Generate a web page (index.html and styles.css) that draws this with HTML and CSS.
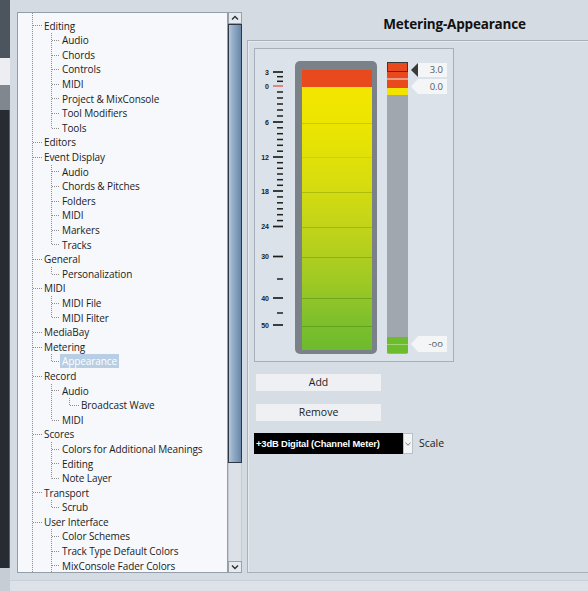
FILE: index.html
```html
<!DOCTYPE html>
<html>
<head>
<meta charset="utf-8">
<link rel="stylesheet" href="styles.css">
</head>
<body>
<div class="app">
  <div class="strip">
    <div class="s1"></div><div class="s2"></div><div class="s3"></div><div class="s4"></div><div class="s5"></div>
  </div>
  <div class="content">
    <div class="main">
      <div class="nav">
        <div class="tree">
          <div class="row l0">Editing</div>
          <div class="group g1">
            <div class="row l1">Audio</div>
            <div class="row l1">Chords</div>
            <div class="row l1">Controls</div>
            <div class="row l1">MIDI</div>
            <div class="row l1">Project &amp; MixConsole</div>
            <div class="row l1">Tool Modifiers</div>
            <div class="row l1">Tools</div>
          </div>
          <div class="row l0">Editors</div>
          <div class="row l0">Event Display</div>
          <div class="group g1">
            <div class="row l1">Audio</div>
            <div class="row l1">Chords &amp; Pitches</div>
            <div class="row l1">Folders</div>
            <div class="row l1">MIDI</div>
            <div class="row l1">Markers</div>
            <div class="row l1">Tracks</div>
          </div>
          <div class="row l0">General</div>
          <div class="group g1">
            <div class="row l1">Personalization</div>
          </div>
          <div class="row l0">MIDI</div>
          <div class="group g1">
            <div class="row l1">MIDI File</div>
            <div class="row l1">MIDI Filter</div>
          </div>
          <div class="row l0">MediaBay</div>
          <div class="row l0">Metering</div>
          <div class="group g1">
            <div class="row l1"><span class="sel">Appearance</span></div>
          </div>
          <div class="row l0">Record</div>
          <div class="group g1">
            <div class="row l1">Audio</div>
            <div class="group g2">
              <div class="row l2">Broadcast Wave</div>
            </div>
            <div class="row l1">MIDI</div>
          </div>
          <div class="row l0">Scores</div>
          <div class="group g1">
            <div class="row l1">Colors for Additional Meanings</div>
            <div class="row l1">Editing</div>
            <div class="row l1">Note Layer</div>
          </div>
          <div class="row l0">Transport</div>
          <div class="group g1">
            <div class="row l1">Scrub</div>
          </div>
          <div class="row l0">User Interface</div>
          <div class="group g1 open">
            <div class="row l1">Color Schemes</div>
            <div class="row l1">Track Type Default Colors</div>
            <div class="row l1">MixConsole Fader Colors</div>
            <div class="row l1">&nbsp;</div>
          </div>
        </div>
        <div class="scroll">
          <div class="sbtn"><svg width="12" height="10" viewBox="0 0 12 10"><path d="M3 6.5 L6 3.5 L9 6.5" fill="none" stroke="#2a2f35" stroke-width="1.4"/></svg></div>
          <div class="thumb"></div>
          <div class="track"></div>
          <div class="sbtn"><svg width="12" height="10" viewBox="0 0 12 10"><path d="M3 3.5 L6 6.5 L9 3.5" fill="none" stroke="#2a2f35" stroke-width="1.4"/></svg></div>
        </div>
      </div>
      <div class="right">
        <div class="title">Metering-Appearance</div>
        <div class="outer">
          <div class="meterbox">
            <svg class="scale" width="38" height="290" viewBox="0 0 38 290">
              <g class="long">
                <line x1="18" y1="23" x2="28" y2="23"/>
                <line x1="18" y1="73" x2="28" y2="73"/>
                <line x1="18" y1="108" x2="28" y2="108"/>
                <line x1="18" y1="142" x2="28" y2="142"/>
                <line x1="18" y1="177.5" x2="28" y2="177.5"/>
                <line x1="18" y1="207.5" x2="28" y2="207.5"/>
                <line x1="18" y1="249" x2="28" y2="249"/>
                <line x1="18" y1="276" x2="28" y2="276"/>
              </g>
              <line class="zero" x1="18" y1="37" x2="28" y2="37"/>
              <g class="short">
                <line x1="22" y1="27.7" x2="28" y2="27.7"/>
                <line x1="22" y1="32.3" x2="28" y2="32.3"/>
                <line x1="22" y1="43" x2="28" y2="43"/>
                <line x1="22" y1="49" x2="28" y2="49"/>
                <line x1="22" y1="55" x2="28" y2="55"/>
                <line x1="22" y1="61" x2="28" y2="61"/>
                <line x1="22" y1="67" x2="28" y2="67"/>
                <line x1="22" y1="78.8" x2="28" y2="78.8"/>
                <line x1="22" y1="84.7" x2="28" y2="84.7"/>
                <line x1="22" y1="90.5" x2="28" y2="90.5"/>
                <line x1="22" y1="96.3" x2="28" y2="96.3"/>
                <line x1="22" y1="102.2" x2="28" y2="102.2"/>
                <line x1="22" y1="113.7" x2="28" y2="113.7"/>
                <line x1="22" y1="119.3" x2="28" y2="119.3"/>
                <line x1="22" y1="125" x2="28" y2="125"/>
                <line x1="22" y1="130.7" x2="28" y2="130.7"/>
                <line x1="22" y1="136.3" x2="28" y2="136.3"/>
                <line x1="22" y1="147.9" x2="28" y2="147.9"/>
                <line x1="22" y1="153.8" x2="28" y2="153.8"/>
                <line x1="22" y1="159.8" x2="28" y2="159.8"/>
                <line x1="22" y1="165.7" x2="28" y2="165.7"/>
                <line x1="22" y1="171.6" x2="28" y2="171.6"/>
                <line x1="22" y1="230" x2="28" y2="230"/>
                <line x1="22" y1="264" x2="28" y2="264"/>
              </g>
              <g class="lbl">
                <text x="14" y="25.5">3</text>
                <text x="14" y="39.5">0</text>
                <text x="14" y="75.5">6</text>
                <text x="14" y="110.5">12</text>
                <text x="14" y="144.5">18</text>
                <text x="14" y="180">24</text>
                <text x="14" y="210">30</text>
                <text x="14" y="251.5">40</text>
                <text x="14" y="278.5">50</text>
              </g>
            </svg>
            <div class="bigmeter">
              <div class="bm-red"></div>
              <div class="bm-fill"></div>
            </div>
            <div class="smallmeter">
              <div class="sm-selred"></div>
              <div class="sm-red a"></div>
              <div class="sm-line"></div>
              <div class="sm-red b"></div>
              <div class="sm-yel"></div>
              <div class="sm-gap"></div>
              <div class="sm-green"></div>
            </div>
            <div class="tags">
              <div class="tag active">3.0</div>
              <div class="tag second">0.0</div>
              <div class="tag third">-oo</div>
            </div>
          </div>
          <div class="btn first">Add</div>
          <div class="btn">Remove</div>
          <div class="scalerow">
            <div class="select">+3dB Digital (Channel Meter)</div>
            <div class="selarrow"><svg width="6" height="4" viewBox="0 0 6 4"><path d="M0.5 0.8 L3 3.2 L5.5 0.8" fill="none" stroke="#777" stroke-width="1"/></svg></div>
            <div class="scalelbl">Scale</div>
          </div>
        </div>
      </div>
    </div>
    <div class="footer"></div>
  </div>
</div>
</body>
</html>
```
FILE: styles.css
```css
html, body {
  margin: 0;
  padding: 0;
}
body {
  width: 588px;
  height: 591px;
  overflow: hidden;
  background: #d4dbe3;
  font-family: "Open Sans", "Noto Sans", sans-serif;
}
.app {
  display: flex;
  width: 588px;
  height: 591px;
}
.strip {
  width: 10px;
  flex: none;
  display: flex;
  flex-direction: column;
}
.s1 { height: 58px; background: #4c545e; }
.s2 { height: 27px; background: #eceef1; }
.s3 { height: 25px; background: #80878f; }
.s4 { height: 458px; background: #272c32; border-right: 1px solid #59616a; box-sizing: border-box; }
.s5 { flex: 1; background: #c6cdd5; }

.content {
  flex: 1;
  display: flex;
  flex-direction: column;
  min-width: 0;
}
.main {
  display: flex;
  height: 573px;
}
.nav {
  display: flex;
  margin-top: 12px;
  margin-left: 7px;
  height: 561px;
}
.tree {
  width: 211px;
  box-sizing: border-box;
  border: 1px solid #949ea9;
  background-color: #f6f8fb;
  padding-top: 5.7px;
  overflow: hidden;
  background-image: repeating-linear-gradient(to bottom, #8e8e8e 0 1px, transparent 1px 2px);
  background-repeat: no-repeat;
  background-position: 14px 0;
  background-size: 1px 100%;
}
.row {
  height: 14.6px;
  line-height: 14.6px;
  font-size: 10px;
  letter-spacing: -0.1px;
  color: #1b1b1b;
  white-space: nowrap;
  background-image: repeating-linear-gradient(to right, #8e8e8e 0 1px, transparent 1px 2px);
  background-repeat: no-repeat;
}
.l0 { padding-left: 26px; background-position: 15px 50%; background-size: 9px 1px; }
.l1 { padding-left: 44px; background-position: 34px 50%; background-size: 8px 1px; }
.l2 { padding-left: 63px; background-position: 52px 50%; background-size: 9px 1px; }
.group {
  background-image: repeating-linear-gradient(to bottom, #8e8e8e 0 1px, transparent 1px 2px);
  background-repeat: no-repeat;
  background-size: 1px calc(100% - 7.3px);
}
.g1 { background-position: 33px 0; }
.g2 { background-position: 51px 0; }
.g1.open { background-size: 1px 100%; }
.sel {
  display: inline-block;
  background: #b8cee4;
  color: #ffffff;
  padding: 0 2px;
  margin-left: -2px;
  line-height: 14px;
}

.scroll {
  width: 14px;
  display: flex;
  flex-direction: column;
}
.sbtn {
  height: 12px;
  box-sizing: border-box;
  border: 1px solid #98a1ab;
  background: #e6eaef;
  display: flex;
  align-items: center;
  justify-content: center;
}
.thumb {
  height: 439px;
  box-sizing: border-box;
  border: 1px solid #2e3741;
  background: linear-gradient(to right, #b3c6da 0%, #93acc7 35%, #7c99b9 70%, #6a87a7 100%);
}
.track {
  flex: 1;
  background: #dce1e7;
  border-left: 1px solid #c3cad2;
  border-right: 1px solid #c3cad2;
}

.right {
  margin-left: 5px;
  flex: 1;
  min-width: 0;
  display: flex;
  flex-direction: column;
}
.title {
  height: 40px;
  box-sizing: border-box;
  padding-top: 14px;
  padding-left: 74px;
  line-height: 20px;
  text-align: center;
  font-weight: 700;
  font-size: 13.5px;
  color: #111;
  letter-spacing: -0.2px;
}
.outer {
  flex: 1;
  border: 1px solid #a8b0b9;
  border-right: none;
  box-shadow: inset 1px 1px 0 #e6eaef;
  background: #d7dde5;
  padding: 7px 0 0 6px;
}
.meterbox {
  width: 200px;
  height: 314px;
  box-sizing: border-box;
  border: 1px solid #a7afb9;
  background: #dce2e9;
  display: flex;
  align-items: flex-start;
}
.scale { flex: none; }
.scale line { stroke: #1e1e1e; }
.scale .long line { stroke-width: 1.7; }
.scale .short line { stroke-width: 1.5; }
.scale .zero { stroke: #e2534a; stroke-width: 1.3; }
.scale .lbl text {
  font-family: "Liberation Sans", Arial, sans-serif;
  font-weight: 700;
  font-size: 7px;
  fill: #222;
  text-anchor: end;
}
.bigmeter {
  margin-top: 12px;
  margin-left: 2px;
  width: 82px;
  height: 293px;
  box-sizing: border-box;
  padding: 9px 5px 4px 7px;
  background: #7b8189;
  border-radius: 5px;
  display: flex;
  flex-direction: column;
}
.bm-red { height: 17px; background: #e8491d; }
.bm-fill {
  flex: 1;
  background:
    linear-gradient(rgba(110,130,0,.28), rgba(110,130,0,.28)) no-repeat 0 36px / 100% 1px,
    linear-gradient(rgba(110,130,0,.15), rgba(110,130,0,.15)) no-repeat 0 70px / 100% 1px,
    linear-gradient(rgba(110,130,0,.35), rgba(110,130,0,.35)) no-repeat 0 105px / 100% 1px,
    linear-gradient(rgba(110,130,0,.35), rgba(110,130,0,.35)) no-repeat 0 140px / 100% 1px,
    linear-gradient(rgba(80,120,0,.35), rgba(80,120,0,.35)) no-repeat 0 170px / 100% 1px,
    linear-gradient(rgba(60,110,0,.35), rgba(60,110,0,.35)) no-repeat 0 211px / 100% 1px,
    linear-gradient(rgba(50,110,0,.35), rgba(50,110,0,.35)) no-repeat 0 239px / 100% 1px,
    linear-gradient(to bottom, #f3e700 0%, #ece500 14%, #d8dd0e 36%, #bfd31a 55%, #9fc924 74%, #80c02b 88%, #6cbb2e 100%);
}
.smallmeter {
  margin-top: 13px;
  margin-left: 10px;
  width: 21px;
  height: 292px;
  background: #a1a7ae;
  border-radius: 0 0 2px 2px;
  display: flex;
  flex-direction: column;
}
.sm-selred { height: 10px; box-sizing: border-box; border: 1.5px solid #3a3a3a; background: #e8491d; }
.sm-red.a { height: 6px; background: #e8491d; }
.sm-line { height: 2px; background: #eb9a84; }
.sm-red.b { height: 8px; background: #e8491d; }
.sm-yel { height: 7px; background: #f2e300; }
.sm-gap { flex: 1; }
.sm-green {
  height: 16px;
  margin-bottom: 1px;
  background: linear-gradient(#9fd678, #9fd678) no-repeat 0 7px / 100% 1px, #6cbc2c;
}
.tags {
  margin-left: 3px;
  margin-top: 14px;
  display: flex;
  flex-direction: column;
}
.tag {
  width: 36px;
  height: 14px;
  box-sizing: border-box;
  padding-right: 4px;
  text-align: right;
  font-size: 9.5px;
  line-height: 14px;
  color: #555b62;
  background: #f3f5f7;
  clip-path: polygon(7px 0, 100% 0, 100% 100%, 7px 100%, 0 50%);
}
.tag.active {
  background: linear-gradient(to right, #3a3a3a 0 7px, #f3f5f7 7px);
}
.tag.second { margin-top: 2px; height: 15px; line-height: 15px; }
.tag.third { margin-top: 242px; height: 16px; line-height: 16px; }

.btn {
  width: 125px;
  height: 17px;
  margin-left: 2px;
  margin-top: 13px;
  background: #eef0f3;
  text-align: center;
  font-size: 10.5px;
  line-height: 17px;
  color: #222;
}
.btn.first { margin-top: 12px; }
.scalerow {
  margin-top: 12px;
  display: flex;
  align-items: stretch;
  height: 21px;
}
.select {
  width: 149px;
  background: #000;
  color: #fff;
  font-family: "Liberation Sans", Arial, sans-serif;
  font-weight: 700;
  font-size: 9.4px;
  letter-spacing: -0.15px;
  line-height: 21px;
  padding-left: 2px;
  box-sizing: border-box;
  white-space: nowrap;
  overflow: hidden;
}
.selarrow {
  width: 10px;
  box-sizing: border-box;
  border: 1px solid #b9c0c8;
  background: #f4f5f7;
  display: flex;
  align-items: center;
  justify-content: center;
}
.scalelbl {
  margin-left: 6px;
  font-size: 10.5px;
  line-height: 20px;
  color: #222;
}
.footer {
  flex: 1;
  background-color: #d4dbe3;
  background-image: linear-gradient(#c9d0d8, #c9d0d8), linear-gradient(#dde2e8, #dde2e8);
  background-repeat: no-repeat;
  background-position: 0 7px, 0 8px;
  background-size: 100% 1px, 100% 100%;
}
```
